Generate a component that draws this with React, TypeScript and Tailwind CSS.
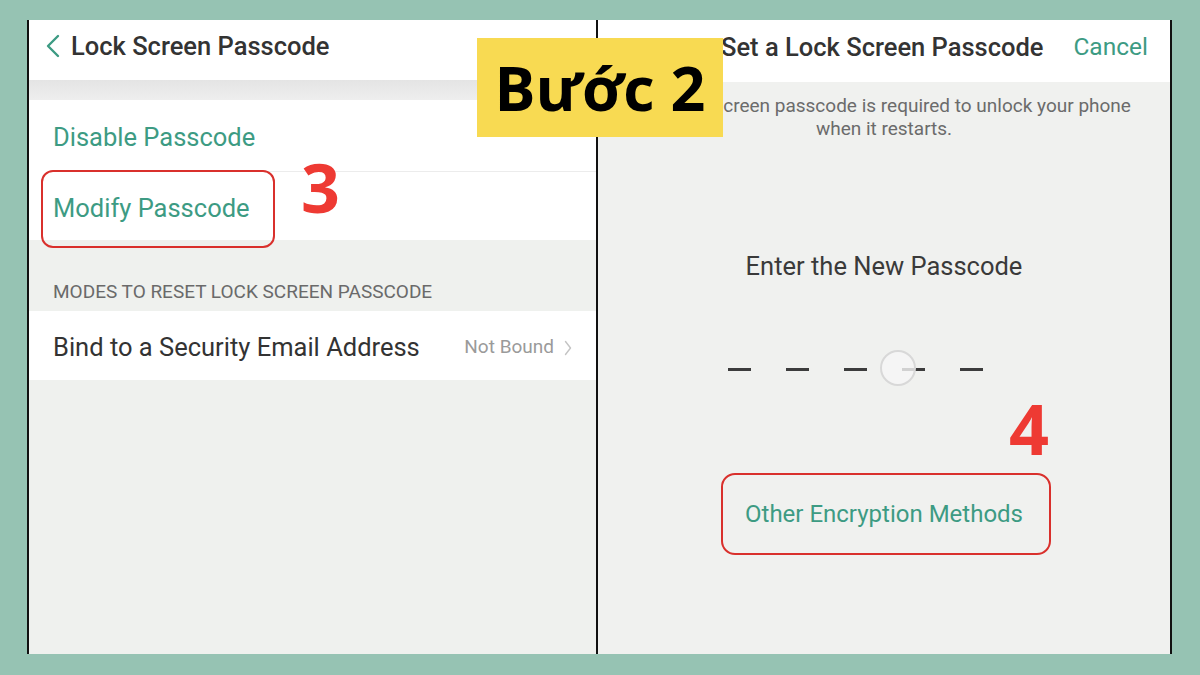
import React from 'react';

const green = 'text-[#3d9b83]';

function ChevronLeft({ className }: { className?: string }) {
    return (
        <svg className={className} viewBox="0 0 14 24" fill="none" stroke="currentColor" strokeWidth={2.4} strokeLinecap="round" strokeLinejoin="round">
            <path d="M12 2 L2 12 L12 22" />
        </svg>
    );
}

function ChevronRight({ className }: { className?: string }) {
    return (
        <svg className={className} viewBox="0 0 8 16" fill="none" stroke="currentColor" strokeWidth={1.4} strokeLinecap="round" strokeLinejoin="round">
            <path d="M1.5 1.5 L6.5 8 L1.5 14.5" />
        </svg>
    );
}

function LeftPanel() {
    return (
        <div className="w-[571px] h-full border-l-2 border-r-2 border-[#111] bg-[#eff1ee] flex flex-col">
            {/* Cabecera */}
            <div className="h-[60px] bg-white flex items-center pl-[17px] pb-[8px]">
                <ChevronLeft className="w-[14px] h-[24px] text-[#3d9b83]" />
                <span className="ml-[11px] text-[25.5px] font-medium text-[#333]">Lock Screen Passcode</span>
            </div>
            <div className="h-[20px] bg-gradient-to-b from-[#e4e4e4] to-[#eeeeee]" />

            {/* Opciones */}
            <div className="bg-white">
                <div className={`h-[71px] flex items-center pl-[24px] pt-[4px] text-[25.5px] ${green}`}>Disable Passcode</div>
                <div className="ml-[22px] h-px bg-[#ececec]" />
                <div className={`h-[68px] flex items-center pl-[24px] pt-[4px] text-[25.5px] ${green}`}>Modify Passcode</div>
            </div>

            <div className="h-[71px] flex items-end pb-[5px] pl-[24px] text-[19px] text-[#6a6a6a]">
                MODES TO RESET LOCK SCREEN PASSCODE
            </div>

            <div className="h-[69px] bg-white flex items-center pl-[24px] pr-[24px] pt-[4px]">
                <span className="text-[25.5px] text-[#333]">Bind to a Security Email Address</span>
                <span className="ml-auto text-[19px] text-[#9a9a9a]">Not Bound</span>
                <ChevronRight className="ml-[10px] w-[8px] h-[16px] text-[#c4c4c4]" />
            </div>
        </div>
    );
}

function RightPanel() {
    return (
        <div className="w-[574px] h-full border-r-2 border-[#111] bg-[#f0f1ef] flex flex-col items-center">
            <div className="w-full h-[62px] bg-white flex items-center pl-[123px] pr-[22px] pb-[8px]">
                <span className="text-[25.5px] font-medium text-[#333]">Set a Lock Screen Passcode</span>
                <span className={`ml-auto text-[24.5px] ${green}`}>Cancel</span>
            </div>

            <p className="mt-[12px] text-center text-[19px] leading-[23px] text-[#6b6b6b]">
                The lock screen passcode is required to unlock your phone<br />when it restarts.
            </p>

            <div className="mt-[107px] text-[25.5px] text-[#3a3a3a]">Enter the New Passcode</div>

            {/* Guiones del código */}
            <div className="relative mt-[83px] mr-[58px] flex gap-[35px]">
                {[0, 1, 2, 3, 4].map((i) => (
                    <div key={i} className="w-[23px] h-[3px] bg-[#3c3c3c]" />
                ))}
                <div className="absolute left-[152px] top-[-18px] w-[36px] h-[36px] rounded-full border-2 border-[#d8d8d8] bg-[#f6f6f6]/80" />
            </div>

            <div className={`mt-[125px] text-[24px] ${green}`}>Other Encryption Methods</div>
        </div>
    );
}

export default function App() {
    return (
        <div className="relative w-[1200px] h-[675px] bg-[#96c3b3] pt-[20px] pl-[27px] overflow-hidden" style={{ fontFamily: 'Roboto, "Liberation Sans", sans-serif' }}>
            <div className="flex h-[634px]">
                <LeftPanel />
                <RightPanel />
            </div>

            {/* Anotaciones */}
            <div className="absolute left-[41px] top-[170px] w-[234px] h-[78px] rounded-[12px] border-2 border-[#d9302c]" />
            <div className="absolute left-[721px] top-[473px] w-[330px] h-[82px] rounded-[14px] border-2 border-[#d9302c]" />
            <div className="absolute left-[301px] top-[153px] text-[68px] font-bold leading-none text-[#ee3a33]" style={{ fontFamily: '"Open Sans", sans-serif' }}>3</div>
            <div className="absolute left-[1009px] top-[393px] text-[70px] font-bold leading-none text-[#ee3a33]" style={{ fontFamily: '"Open Sans", sans-serif' }}>4</div>

            <div className="absolute left-[477px] top-[38px] w-[246px] h-[99px] bg-[#f8da52] flex items-center justify-center">
                <span className="text-[61px] font-bold text-black" style={{ fontFamily: '"Open Sans", sans-serif' }}>Bước 2</span>
            </div>
        </div>
    );
}
